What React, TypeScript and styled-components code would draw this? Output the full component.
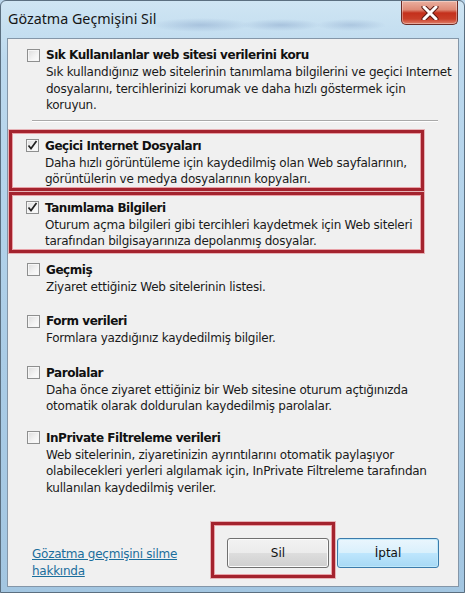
import React from "react";
import styled, { createGlobalStyle } from "styled-components";

const GlobalStyle = createGlobalStyle`
  html, body { margin: 0; padding: 0; }
  body { width: 465px; height: 593px; overflow: hidden; background: #b9d5ea; }
`;

const Window = styled.div`
  width: 465px;
  height: 593px;
  box-sizing: border-box;
  display: flex;
  flex-direction: column;
  background: linear-gradient(180deg, #cfe5f3 0%, #bcd9ee 10%, #aacce6 60%, #a3c6e1 100%);
  border: 1px solid #5b6f80;
  border-radius: 6px 6px 0 0;
  font-family: "DejaVu Sans", Tahoma, sans-serif;
  color: #1a1a1a;
`;

const TitleBar = styled.div`
  height: 37px;
  flex: none;
  display: flex;
  align-items: flex-start;
  justify-content: space-between;
  padding: 0 6px 0 7px;
  background:
    radial-gradient(ellipse 50px 7px at 200px 24px, rgba(110,140,185,0.35), transparent),
    radial-gradient(ellipse 40px 6px at 280px 24px, rgba(110,140,185,0.35), transparent),
    radial-gradient(ellipse 35px 6px at 350px 24px, rgba(110,140,185,0.3), transparent);
`;

const Title = styled.div`
  font-family: "Noto Sans", "Open Sans", sans-serif;
  font-size: 14.3px;
  line-height: 20px;
  margin-top: 8px;
  color: #161616;
`;

const CloseButton = styled.div`
  width: 57px;
  height: 24px;
  box-sizing: border-box;
  border: 1px solid #6b2b25;
  border-top: none;
  border-radius: 0 0 5px 5px;
  background: linear-gradient(180deg, #eab0a0 0%, #de8a76 38%, #c4301c 52%, #c93e28 78%, #e0806a 100%);
  display: flex;
  align-items: center;
  justify-content: center;
  box-shadow: inset 0 0 0 1px rgba(255,255,255,0.35);
`;

const Client = styled.div`
  flex: 1;
  margin: 0 5px 5px 6px;
  border: 1px solid #8496a8;
  background: #f0f0f0;
  display: flex;
  flex-direction: column;
  padding: 7px 0 0 1px;
  box-sizing: border-box;
`;

const Item = styled.div<{ $top: number; $hl?: boolean }>`
  margin-top: ${(p) => p.$top}px;
  ${(p) =>
    p.$hl
      ? `
    width: 415px;
    box-sizing: border-box;
    border: 3px solid #a4232e;
    box-shadow: inset 0 0 0 1px #e8a0a6, 0 0 0 1px #e6b2b6;
    padding: 4px 0 0 14px;
  `
      : `
    padding: 0 0 0 18px;
  `}
`;

const Head = styled.label`
  display: flex;
  align-items: center;
  gap: 6px;
  height: 18px;
  font-weight: bold;
  font-size: 12px;
  letter-spacing: -0.45px;
  white-space: nowrap;
  color: #111;
`;

const Box = styled.span`
  width: 13px;
  height: 13px;
  box-sizing: border-box;
  flex: none;
  border: 1px solid #8e8f8f;
  background: linear-gradient(135deg, #dcdcdc 0%, #f4f4f4 60%, #fdfdfd 100%);
  box-shadow: inset 0 0 0 1px #f6f6f6;
  display: flex;
  align-items: center;
  justify-content: center;
`;

const Desc = styled.div`
  padding-left: 19px;
  font-size: 12px;
  line-height: 16.5px;
  letter-spacing: -0.25px;
  white-space: nowrap;
  color: #1a1a1a;
`;

const Separator = styled.div`
  margin: 6px 0 0 23px;
  width: 406px;
  height: 1px;
  background: #a9a9a9;
  border-bottom: 1px solid #fff;
`;

const Footer = styled.div`
  margin-top: auto;
  display: flex;
  align-items: flex-start;
  padding: 0 0 8px 23px;
`;

const HelpLink = styled.a`
  align-self: flex-end;
  margin-bottom: -2px;
  font-size: 12px;
  line-height: 17px;
  letter-spacing: -0.25px;
  color: #1b6e9c;
  text-decoration: underline;
  width: 170px;
`;

const Buttons = styled.div`
  display: flex;
  align-items: flex-start;
  gap: 2px;
  margin-left: 9px;
`;

const Focus = styled.div`
  border: 3px solid #a4232e;
  box-shadow: inset 0 0 0 1px #eaa2a8, 0 0 0 1px #e6b2b6;
  padding: 13px 3px 7px 13px;
`;

const Button = styled.button<{ $default?: boolean }>`
  width: 102px;
  height: 30px;
  margin-top: ${(p) => (p.$default ? "16px" : "0")};
  font-family: "DejaVu Sans", Tahoma, sans-serif;
  font-size: 12px;
  color: #111;
  border-radius: 3px;
  border: 1px solid ${(p) => (p.$default ? "#3b7bab" : "#707070")};
  background: ${(p) =>
    p.$default
      ? "linear-gradient(180deg, #eaf6fd 0%, #d9f0fc 50%, #bee6fd 51%, #a7d9f5 100%)"
      : "linear-gradient(180deg, #f2f2f2 0%, #ebebeb 50%, #dddddd 51%, #cfcfcf 100%)"};
  box-shadow: inset 0 0 0 1px ${(p) => (p.$default ? "#bfe9fb" : "#fbfbfb")};
  padding: 0;
`;

const Check = () => (
  <svg width="11" height="11" viewBox="0 0 11 11">
    <path d="M1.5 5.5 L4 8.5 L9.5 1" fill="none" stroke="#222" strokeWidth="1.7" />
  </svg>
);

const XMark = () => (
  <svg width="18" height="14" viewBox="0 0 18 14">
    <path d="M3 1 L15 13 M15 1 L3 13" stroke="#5a1a14" strokeWidth="5" strokeLinecap="round" />
    <path d="M3 1 L15 13 M15 1 L3 13" stroke="#ffffff" strokeWidth="3" strokeLinecap="round" />
  </svg>
);

type Opt = {
  title: string;
  lines: string[];
  checked?: boolean;
  hl?: boolean;
  top: number;
};

const options: Opt[] = [
  {
    title: "Sık Kullanılanlar web sitesi verilerini koru",
    lines: [
      "Sık kullandığınız web sitelerinin tanımlama bilgilerini ve geçici Internet",
      "dosyalarını, tercihlerinizi korumak ve daha hızlı göstermek için",
      "koruyun.",
    ],
    top: 0,
  },
  {
    title: "Geçici Internet Dosyaları",
    lines: [
      "Daha hızlı görüntüleme için kaydedilmiş olan Web sayfalarının,",
      "görüntülerin ve medya dosyalarının kopyaları.",
    ],
    checked: true,
    hl: true,
    top: 8,
  },
  {
    title: "Tanımlama Bilgileri",
    lines: [
      "Oturum açma bilgileri gibi tercihleri kaydetmek için Web siteleri",
      "tarafından bilgisayarınıza depolanmış dosyalar.",
    ],
    checked: true,
    hl: true,
    top: 1,
  },
  { title: "Geçmiş", lines: ["Ziyaret ettiğiniz Web sitelerinin listesi."], top: 8 },
  { title: "Form verileri", lines: ["Formlara yazdığınız kaydedilmiş bilgiler."], top: 17 },
  {
    title: "Parolalar",
    lines: [
      "Daha önce ziyaret ettiğiniz bir Web sitesine oturum açtığınızda",
      "otomatik olarak doldurulan kaydedilmiş parolalar.",
    ],
    top: 17,
  },
  {
    title: "InPrivate Filtreleme verileri",
    lines: [
      "Web sitelerinin, ziyaretinizin ayrıntılarını otomatik paylaşıyor",
      "olabilecekleri yerleri algılamak için, InPrivate Filtreleme tarafından",
      "kullanılan kaydedilmiş veriler.",
    ],
    top: 14,
  },
];

export default function App() {
  return (
    <>
      <GlobalStyle />
      <Window>
        <TitleBar>
          <Title>Gözatma Geçmişini Sil</Title>
          <CloseButton>
            <XMark />
          </CloseButton>
        </TitleBar>
        <Client>
          {options.map((o, i) => (
            <React.Fragment key={o.title}>
              <Item $top={o.top} $hl={o.hl}>
                <Head>
                  <Box>{o.checked && <Check />}</Box>
                  {o.title}
                </Head>
                <Desc>
                  {o.lines.map((l) => (
                    <div key={l}>{l}</div>
                  ))}
                </Desc>
              </Item>
              {i === 0 && <Separator />}
            </React.Fragment>
          ))}
          <Footer>
            <HelpLink href="#">Gözatma geçmişini silme hakkında</HelpLink>
            <Buttons>
              <Focus>
                <Button>Sil</Button>
              </Focus>
              <Button $default>İptal</Button>
            </Buttons>
          </Footer>
        </Client>
      </Window>
    </>
  );
}
